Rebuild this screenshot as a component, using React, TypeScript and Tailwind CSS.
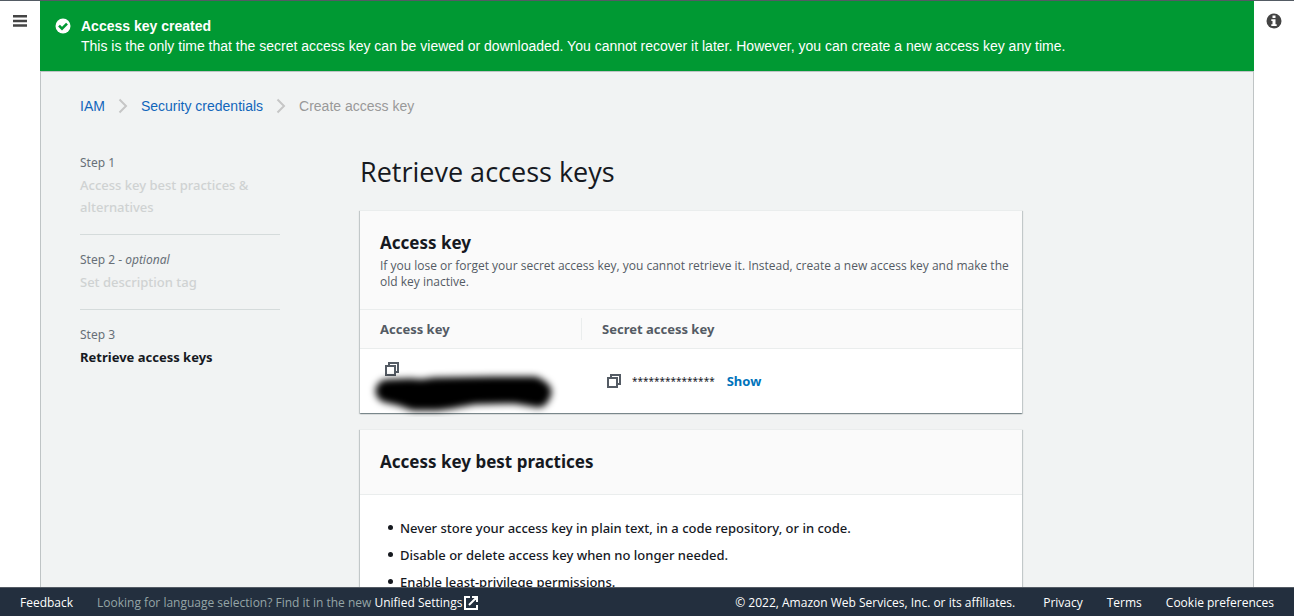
import type { ReactNode } from "react";

function CopyIcon() {
  return (
    <svg viewBox="0 0 16 16" className="size-4" fill="none" stroke="#545b64" strokeWidth="2" aria-hidden="true">
      <path d="M2 5h9v9H2z" />
      <path d="M5 5V2h9v9h-3" />
    </svg>
  );
}

function CheckIcon() {
  return (
    <svg viewBox="0 0 16 16" className="size-4 shrink-0" aria-hidden="true">
      <circle cx="8" cy="8" r="7.5" fill="#fff" />
      <path d="M4 7.600l3 3 5-5" fill="none" stroke="#009933" strokeWidth="2.600" />
    </svg>
  );
}

function InfoIcon() {
  return (
    <svg viewBox="0 0 16 16" className="size-4" aria-hidden="true">
      <circle cx="8" cy="8" r="7.5" fill="#444" />
      <path d="M6.5 2.500h3V5h-3zM5.300 6.300h4.200v5h1.200V13H5.300v-1.700h1.200V8H5.300z" fill="#fff" />
    </svg>
  );
}

function Chevron() {
  return (
    <svg viewBox="0 0 10 16" className="h-4 w-[10px]" fill="none" stroke="#c6c6c6" strokeWidth="2" aria-hidden="true">
      <path d="M1.500 1.500L8 8l-6.500 6.500" />
    </svg>
  );
}

function ExternalIcon() {
  return (
    <svg viewBox="0 0 14 14" className="size-[14px]" fill="none" stroke="#fff" strokeWidth="2" aria-hidden="true">
      <path d="M6 1H1v12h12V9M8 1h5v5M13 1L5 9" />
    </svg>
  );
}

function Redaction() {
  return (
    <svg viewBox="0 0 200 56" className="absolute -left-4 -top-4 h-14 w-[200px]" aria-hidden="true">
      <defs>
        <filter id="soft" filterUnits="userSpaceOnUse" x="0" y="0" width="200" height="56">
          <feGaussianBlur stdDeviation="3.800" />
        </filter>
      </defs>
      <path
        d="M23 30L46 29L58 30L72 28L130 27L170 27L176 31L174 35L150 31L110 32L88 36L72 38L50 38L36 33Z"
        fill="#000"
        stroke="#000"
        strokeWidth="23"
        strokeLinejoin="round"
        filter="url(#soft)"
      />
    </svg>
  );
}

function Step({ label, optional, title, active, last }: { label: string; optional?: boolean; title: string; active?: boolean; last?: boolean }) {
  return (
    <li className={last ? "" : "mb-[14px] border-b border-[#d5dbdb] pb-4"}>
      <div className="text-xs leading-[22px] text-[#687078]">
        {label}
        {optional && <> - <em>optional</em></>}
      </div>
      <div className={active ? "text-[13px] font-bold leading-[22px] text-[#16191f]" : "text-[13px] font-medium leading-[22px] text-[#cfd2d2]"}>{title}</div>
    </li>
  );
}

function Card({ title, description, children }: { title: string; description?: string; children: ReactNode }) {
  return (
    <section className="border-t border-[#eaeded] bg-white shadow-[0_1px_1px_0_rgba(0,28,36,0.3),1px_1px_1px_0_rgba(0,28,36,0.15),-1px_1px_1px_0_rgba(0,28,36,0.15)]">
      <header className="border-b border-[#eaeded] bg-[#fafafa] py-[19px] pl-5 pr-3">
        <h2 className="text-[17px] font-bold leading-[26px]">{title}</h2>
        {description && <p className="pt-[2px] font-['Open_Sans',sans-serif] text-xs leading-4 text-[#545b64]">{description}</p>}
      </header>
      {children}
    </section>
  );
}

const practices = [
  "Never store your access key in plain text, in a code repository, or in code.",
  "Disable or delete access key when no longer needed.",
  "Enable least-privilege permissions.",
];

export default function App() {
  return (
    <div className="flex h-screen flex-col border-t border-[#545b64] bg-white font-['Noto_Sans',sans-serif] text-[13px] text-[#16191f]">
      <div className="flex min-h-0 flex-1">
        <div className="w-10 shrink-0 pl-[13px] pt-[13px]">
          <button aria-label="Open navigation" className="block">
            <svg viewBox="0 0 14 14" className="size-[14px]" stroke="#444" strokeWidth="2.500" aria-hidden="true">
              <path d="M0 2.300h14M0 7h14M0 11.600h14" />
            </svg>
          </button>
        </div>

        <div className="flex min-w-0 flex-1 flex-col">
          <div role="status" className="flex shrink-0 gap-[10px] bg-[#009933] px-[15px] py-[15px] font-['Liberation_Sans',sans-serif] text-sm leading-5 text-white">
            <div className="pt-[2px]"><CheckIcon /></div>
            <div>
              <p className="font-bold">Access key created</p>
              <p>This is the only time that the secret access key can be viewed or downloaded. You cannot recover it later. However, you can create a new access key any time.</p>
            </div>
          </div>

          <main className="min-h-0 flex-1 overflow-hidden border-x border-t border-[#bfc4c5] bg-[#f1f3f3] pl-[39px] pr-[42px] pt-6">
            <nav aria-label="Breadcrumb" className="font-['Liberation_Sans',sans-serif] text-sm leading-5">
              <ol className="flex items-center">
                <li><a href="#iam" className="text-[#1166bb]">IAM</a></li>
                <li className="px-[13px]"><Chevron /></li>
                <li><a href="#credentials" className="text-[#1166bb]">Security credentials</a></li>
                <li className="px-[13px]"><Chevron /></li>
                <li className="text-[#999]">Create access key</li>
              </ol>
            </nav>

            <div className="flex gap-20 pt-9">
              <ol className="w-[200px] shrink-0">
                <Step label="Step 1" title="Access key best practices & alternatives" />
                <Step label="Step 2" optional title="Set description tag" />
                <Step label="Step 3" title="Retrieve access keys" active last />
              </ol>

              <div className="grid min-w-0 flex-1 grid-cols-9">
                <div className="col-span-7">
                  <h1 className="mb-5 pt-[2px] font-['Open_Sans',sans-serif] text-[27px] leading-9">Retrieve access keys</h1>
                  <div className="flex flex-col gap-4">
                    <Card
                      title="Access key"
                      description="If you lose or forget your secret access key, you cannot retrieve it. Instead, create a new access key and make the old key inactive."
                    >
                      <table className="w-full table-fixed text-left">
                        <thead className="border-b border-[#eaeded] bg-[#fafafa] text-[#545b64]">
                          <tr>
                            <th scope="col" className="w-[222px] py-2 pl-5 font-bold leading-[22px]">
                              <div className="border-r border-[#eaeded]">Access key</div>
                            </th>
                            <th scope="col" className="py-2 pl-5 font-bold leading-[22px]">Secret access key</th>
                          </tr>
                        </thead>
                        <tbody>
                          <tr>
                            <td className="h-16 pl-5 align-top">
                              <div className="pl-1 pt-3">
                                <button aria-label="Copy access key" className="block"><CopyIcon /></button>
                              </div>
                              <div className="relative h-[22px]"><Redaction /></div>
                            </td>
                            <td className="h-16 pl-6">
                              <div className="flex items-center leading-[22px]">
                                <button aria-label="Copy secret access key"><CopyIcon /></button>
                                <span className="pl-[10px] text-[10px]">***************</span>
                                <button className="pl-3 font-bold text-[#0073bb]">Show</button>
                              </div>
                            </td>
                          </tr>
                        </tbody>
                      </table>
                    </Card>

                    <Card title="Access key best practices">
                      <ul className="flex flex-col gap-[5px] py-[22px] pl-7 pr-5">
                        {practices.map((p) => (
                          <li key={p} className="flex items-center gap-[7px] font-medium leading-[22px] before:size-[5px] before:shrink-0 before:rounded-full before:bg-[#16191f]">{p}</li>
                        ))}
                      </ul>
                    </Card>
                  </div>
                </div>
              </div>
            </div>
          </main>
        </div>

        <div className="w-10 shrink-0 pl-3 pt-3">
          <button aria-label="Open help panel" className="block"><InfoIcon /></button>
        </div>
      </div>

      <footer className="flex shrink-0 items-center justify-between border-t border-[#545b64] bg-[#232f3e] px-5 pt-[2px] font-['Open_Sans',sans-serif] text-xs leading-[26px] text-white">
        <div className="flex items-center">
          <button>Feedback</button>
          <span className="pl-6 text-[#95a5a6]">Looking for language selection? Find it in the new&nbsp;</span>
          <a href="#settings" className="flex items-center gap-[2px]">Unified Settings <ExternalIcon /></a>
        </div>
        <div className="flex items-center">
          <span className="pr-7">© 2022, Amazon Web Services, Inc. or its affiliates.</span>
          <a href="#privacy" className="pr-6">Privacy</a>
          <a href="#terms" className="pr-6">Terms</a>
          <button>Cookie preferences</button>
        </div>
      </footer>
    </div>
  );
}
